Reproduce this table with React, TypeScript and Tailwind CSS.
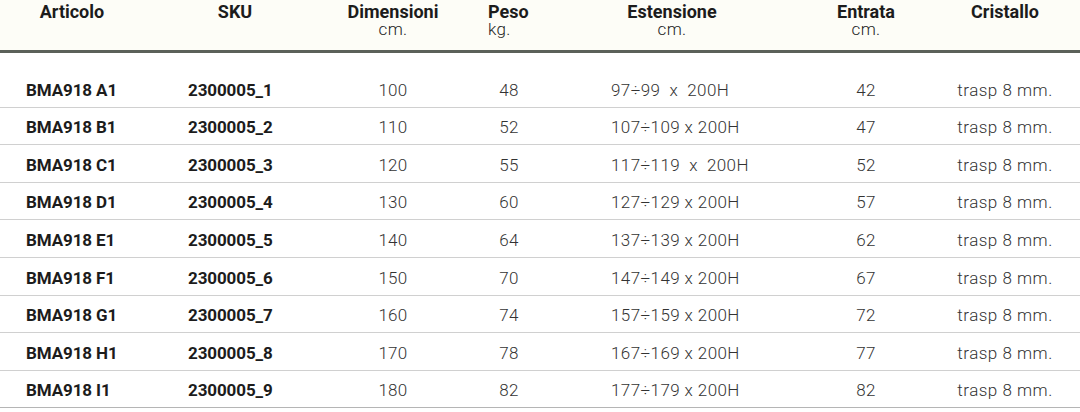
import React from "react";

const rows = [
  ["BMA918 A1", "2300005_1", "100", "48", "97÷99  x  200H", "42", "trasp 8 mm."],
  ["BMA918 B1", "2300005_2", "110", "52", "107÷109 x 200H", "47", "trasp 8 mm."],
  ["BMA918 C1", "2300005_3", "120", "55", "117÷119  x  200H", "52", "trasp 8 mm."],
  ["BMA918 D1", "2300005_4", "130", "60", "127÷129 x 200H", "57", "trasp 8 mm."],
  ["BMA918 E1", "2300005_5", "140", "64", "137÷139 x 200H", "62", "trasp 8 mm."],
  ["BMA918 F1", "2300005_6", "150", "70", "147÷149 x 200H", "67", "trasp 8 mm."],
  ["BMA918 G1", "2300005_7", "160", "74", "157÷159 x 200H", "72", "trasp 8 mm."],
  ["BMA918 H1", "2300005_8", "170", "78", "167÷169 x 200H", "77", "trasp 8 mm."],
  ["BMA918 I1", "2300005_9", "180", "82", "177÷179 x 200H", "82", "trasp 8 mm."],
];

const grid = "grid grid-cols-[144px_182px_134px_98px_228px_160px_118px_16px]";

export default function App() {
  return (
    <div
      className="w-[1080px] h-[412px] bg-white overflow-hidden text-[#1c1c1c]"
      style={{ fontFamily: "Roboto, 'Liberation Sans', sans-serif" }}
    >
      <div className={`${grid} h-[50px] bg-[#fdfdf7] text-[18px] leading-[18px] pt-[3px]`}>
        <div className="text-center font-bold">Articolo</div>
        <div className="text-center font-bold">SKU</div>
        <div className="text-center">
          <div className="font-bold">Dimensioni</div>
          <div className="font-light text-[17px] leading-[17px] tracking-[0.3px]">cm.</div>
        </div>
        <div className="pl-[28px]">
          <div className="font-bold">Peso</div>
          <div className="font-light text-[17px] leading-[17px] tracking-[0.3px]">kg.</div>
        </div>
        <div className="text-center">
          <div className="font-bold">Estensione</div>
          <div className="font-light text-[17px] leading-[17px] tracking-[0.3px]">cm.</div>
        </div>
        <div className="text-center">
          <div className="font-bold">Entrata</div>
          <div className="font-light text-[17px] leading-[17px] tracking-[0.3px]">cm.</div>
        </div>
        <div className="text-center font-bold">Cristallo</div>
        <div />
      </div>
      <div className="h-[3px] bg-[#5b6159]" />
      <div className="h-[17px]" />
      {rows.map((r, i) => (
        <div
          key={i}
          className={`${grid} h-[37.6px] pt-[4px] items-center border-b ${i === rows.length - 1 ? "border-[#b5b5b5]" : "border-[#d0d0d0]"} text-[17px]`}
        >
          <div className="pl-[26px] font-bold tracking-[-0.1px]">{r[0]}</div>
          <div className="pl-[44px] font-bold tracking-[-0.1px]">{r[1]}</div>
          <div className="text-center font-light text-[#333] tracking-[0.3px]">{r[2]}</div>
          <div className="text-center font-light text-[#333] tracking-[0.3px]">{r[3]}</div>
          <div className="pl-[53px] font-light text-[#333] whitespace-pre tracking-[0.4px]">{r[4]}</div>
          <div className="text-center font-light text-[#333] tracking-[0.3px]">{r[5]}</div>
          <div className="text-center font-light text-[#333] whitespace-nowrap tracking-[0.5px]">{r[6]}</div>
          <div />
        </div>
      ))}
    </div>
  );
}
